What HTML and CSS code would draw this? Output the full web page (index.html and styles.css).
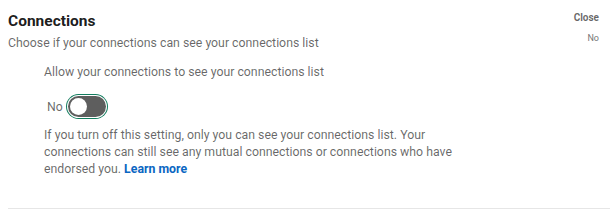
FILE: index.html
```html
<!DOCTYPE html>
<html>
<head>
<meta charset="utf-8">
<link rel="stylesheet" href="styles.css">
</head>
<body>
<div class="page">
  <div class="header">
    <div class="heading">
      <h1 class="title">Connections</h1>
      <p class="subtitle">Choose if your connections can see your connections list</p>
    </div>
    <div class="side">
      <span class="close">Close</span>
      <span class="state">No</span>
    </div>
  </div>
  <div class="body">
    <p class="question">Allow your connections to see your connections list</p>
    <div class="toggle-row">
      <span class="toggle-label">No</span>
      <span class="toggle"><span class="knob"></span></span>
    </div>
    <p class="help">If you turn off this setting, only you can see your connections list. Your connections can still see any mutual connections or connections who have endorsed you. <a class="link" href="#">Learn more</a></p>
  </div>
  <div class="divider"></div>
</div>
</body>
</html>
```
FILE: styles.css
```css
html, body {
  margin: 0;
  padding: 0;
  background: #fff;
}
body {
  font-family: Roboto, "Liberation Sans", Arial, sans-serif;
  color: rgba(0,0,0,0.6);
}
.page {
  padding: 12px 5px 0 8px;
}
.header {
  display: flex;
  justify-content: space-between;
}
.title {
  margin: 0;
  font-size: 15.5px;
  line-height: 18px;
  font-weight: bold;
  color: rgba(0,0,0,0.9);
}
.subtitle {
  margin: 5px 0 0;
  font-size: 12.3px;
  line-height: 16px;
}
.side {
  display: flex;
  flex-direction: column;
  align-items: flex-end;
  padding-right: 11px;
}
.close {
  font-size: 10px;
  font-weight: bold;
  line-height: 12px;
}
.state {
  font-size: 9px;
  line-height: 12px;
  margin-top: 8px;
  color: #777;
}
.body {
  padding-left: 36px;
  padding-top: 13px;
}
.question {
  margin: 0;
  font-size: 12.3px;
  line-height: 16px;
}
.toggle-row {
  display: flex;
  align-items: center;
  gap: 5px;
  margin-top: 16px;
  padding-left: 3px;
}
.toggle-label {
  font-size: 12.3px;
  line-height: 16px;
}
.toggle {
  position: relative;
  display: inline-block;
  width: 38px;
  height: 21px;
  border-radius: 11px;
  background: #5e5e5e;
  box-shadow: 0 0 0 1px #fff, 0 0 0 2px #127c5e;
}
.knob {
  position: absolute;
  left: 2px;
  top: 2px;
  width: 17px;
  height: 17px;
  border-radius: 50%;
  background: #fff;
}
.help {
  margin: 10px 0 0;
  font-size: 12.3px;
  line-height: 17px;
  max-width: 408px;
}
.link {
  color: #0a66c2;
  font-weight: bold;
  text-decoration: none;
}
.divider {
  margin-top: 30px;
  height: 1px;
  background: #e6e6e6;
}
```
